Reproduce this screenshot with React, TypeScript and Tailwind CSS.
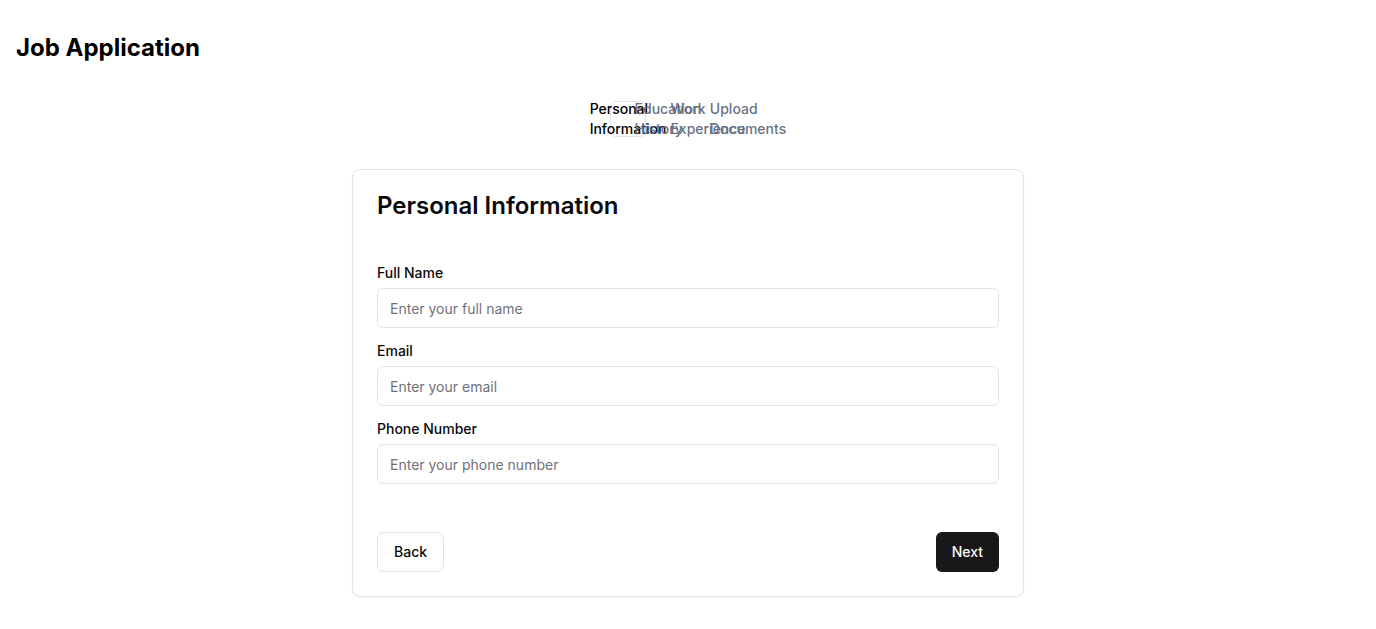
import { useState } from "react";

const steps = [
  "Personal Information",
  "Education History",
  "Work Experience",
  "Upload Documents",
];

const fields = [
  { id: "name", label: "Full Name", type: "text", placeholder: "Enter your full name" },
  { id: "email", label: "Email", type: "email", placeholder: "Enter your email" },
  { id: "phone", label: "Phone Number", type: "tel", placeholder: "Enter your phone number" },
];

function StepNav({ current, onSelect }: { current: number; onSelect: (step: number) => void }) {
  return (
    <nav aria-label="Application steps" className="mb-8 flex justify-center">
      <ul className="flex gap-1">
        {steps.map((step, index) => (
          <li key={step}>
            <a
              href="#"
              aria-current={index === current ? "step" : undefined}
              onClick={(event) => {
                event.preventDefault();
                onSelect(index);
              }}
              className={
                index === current
                  ? "inline-flex size-9 items-center justify-center rounded-md border border-zinc-200 text-sm font-medium text-black"
                  : "inline-flex size-9 items-center justify-center rounded-md text-sm font-medium text-gray-500"
              }
            >
              <span>{step}</span>
            </a>
          </li>
        ))}
      </ul>
    </nav>
  );
}

export default function App() {
  const [current, setCurrent] = useState(0);

  return (
    <main className="px-4 py-8 font-['Inter',sans-serif] text-black">
      <h1 className="mb-8 text-2xl font-bold">Job Application</h1>
      <StepNav current={current} onSelect={setCurrent} />
      <form
        onSubmit={(event) => event.preventDefault()}
        className="mx-auto max-w-2xl rounded-lg border border-zinc-200 bg-white text-zinc-950 shadow-xs"
      >
        <div className="p-6">
          <h2 className="text-2xl leading-none font-semibold">{steps[current]}</h2>
        </div>
        <div className="flex flex-col gap-4 p-6">
          {fields.map((field) => (
            <div key={field.id} className="flex flex-col gap-2">
              <label htmlFor={field.id} className="text-sm leading-none font-medium">
                {field.label}
              </label>
              <input
                id={field.id}
                type={field.type}
                placeholder={field.placeholder}
                className="h-10 w-full rounded-md border border-zinc-200 bg-white px-3 py-2 text-sm placeholder:text-zinc-500"
              />
            </div>
          ))}
        </div>
        <div className="flex justify-between p-6">
          <button
            type="button"
            onClick={() => setCurrent(Math.max(current - 1, 0))}
            className="h-10 rounded-md border border-zinc-200 bg-white px-4 text-sm font-medium"
          >
            Back
          </button>
          <button
            type="button"
            onClick={() => setCurrent(Math.min(current + 1, steps.length - 1))}
            className="h-10 rounded-md bg-zinc-900 px-4 text-sm font-medium text-zinc-50"
          >
            Next
          </button>
        </div>
      </form>
    </main>
  );
}
